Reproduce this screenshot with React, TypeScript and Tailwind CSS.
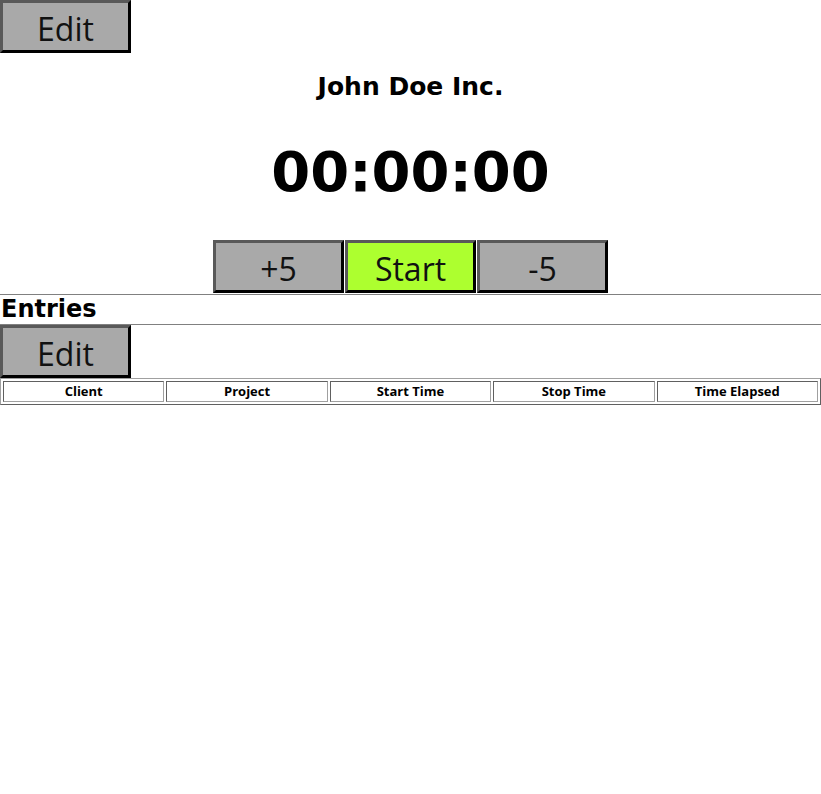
import { ReactNode } from 'react'

interface ButtonProps {
  children: ReactNode
  green?: boolean
}

/** Chunky bevelled button used across the timer page */
function Button({ children, green = false }: ButtonProps) {
  return (
    <button
      className={`w-[131px] h-[53px] pt-[4px] border-[3px] border-t-[#595959] border-l-[#595959] border-b-black border-r-black text-[32px] leading-none text-[#111] font-['Open_Sans',sans-serif] ${
        green ? 'bg-[#adff2f]' : 'bg-[#a9a9a9]'
      }`}
    >
      {children}
    </button>
  )
}

const columns = ['Client', 'Project', 'Start Time', 'Stop Time', 'Time Elapsed']

export default function App() {
  return (
    <div className="w-[821px] min-h-[794px] bg-white text-black font-['DejaVu_Sans',Verdana,sans-serif]">
      {/* Header */}
      <Button>Edit</Button>
      <h1 className="mt-[17px] text-center text-[25px] leading-[34px] font-bold">John Doe Inc.</h1>
      <div className="mt-[34px] text-center text-[56px] leading-[68px] font-bold">00:00:00</div>

      {/* Controls */}
      <div className="mt-[34px] flex justify-center gap-[1px]">
        <Button>+5</Button>
        <Button green>Start</Button>
        <Button>-5</Button>
      </div>

      {/* Entries */}
      <div className="mt-[1px] border-t border-b border-[#808080]">
        <h2 className="pl-[1px] text-[24px] leading-[29px] font-bold">Entries</h2>
      </div>
      <Button>Edit</Button>
      <table className="w-full table-fixed border-separate border-spacing-[2px] border border-t-[#a0a0a0] border-l-[#a0a0a0] border-b-[#606060] border-r-[#606060]">
        <thead>
          <tr>
            {columns.map((c) => (
              <th
                key={c}
                className="border border-t-[#606060] border-l-[#606060] border-b-[#a0a0a0] border-r-[#a0a0a0] text-[13px] leading-[19px] font-bold font-['Open_Sans',sans-serif] py-0"
              >
                {c}
              </th>
            ))}
          </tr>
        </thead>
      </table>
    </div>
  )
}
